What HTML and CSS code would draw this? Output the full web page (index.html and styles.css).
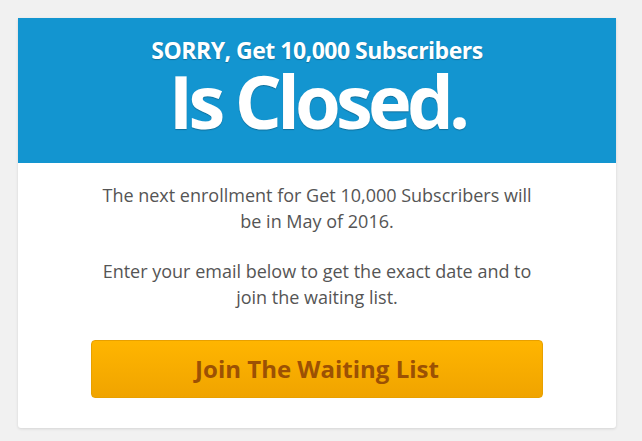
FILE: index.html
```html
<!DOCTYPE html>
<html>
<head>
<meta charset="utf-8">
<link rel="stylesheet" href="styles.css">
</head>
<body>
<div class="card">
  <div class="header">
    <div class="sub">SORRY, Get 10,000 Subscribers</div>
    <div class="big">Is Closed.</div>
  </div>
  <div class="content">
    <p>The next enrollment for Get 10,000 Subscribers will be in May of 2016.</p>
    <p>Enter your email below to get the exact date and to join the waiting list.</p>
    <a class="btn" href="#">Join The Waiting List</a>
  </div>
</div>
</body>
</html>
```
FILE: styles.css
```css
html, body { margin: 0; padding: 0; }
body {
  background: #f1f1f1;
  font-family: "Open Sans", "Noto Sans", sans-serif;
  padding: 18px 26px 0 18px;
  height: 441px;
  box-sizing: border-box;
}
.card {
  width: 598px;
  background: #fff;
  box-shadow: 0 1px 3px rgba(0,0,0,0.12);
  border-radius: 0 0 3px 3px;
}
.header {
  background: #1395d0;
  height: 145px;
  box-sizing: border-box;
  padding-top: 21px;
  text-align: center;
  color: #fff;
  text-shadow: 0 1px 1px rgba(0,0,0,0.25);
}
.sub {
  font-weight: 700;
  font-size: 23px;
  letter-spacing: -0.5px;
  line-height: 23px;
}
.big {
  font-weight: 700;
  font-size: 74px;
  letter-spacing: -4.8px;
  line-height: 78px;
}
.content {
  padding: 19px 73px 30px;
  text-align: center;
  color: #555;
}
.content p {
  margin: 0 0 24px;
  font-size: 18px;
  line-height: 26px;
}
.content p + p {
  margin-bottom: 30px;
}
.btn {
  display: block;
  height: 58px;
  box-sizing: border-box;
  line-height: 56px;
  background: linear-gradient(#ffb500, #f0a400);
  border: 1px solid #e8a000;
  border-radius: 4px;
  color: #9c5104;
  font-weight: 700;
  font-size: 24px;
  text-decoration: none;
}
```
